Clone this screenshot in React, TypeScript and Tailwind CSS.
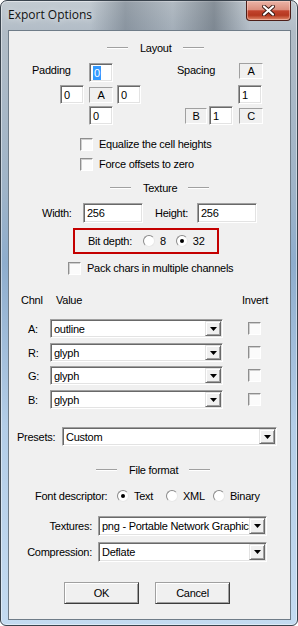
import React from 'react';

const text = "font-['Liberation_Sans',Arial,sans-serif] text-[11px] tracking-[-0.25px] leading-[14px] text-black";
const sunken =
  'border border-t-[#a0a0a0] border-l-[#a0a0a0] border-r-white border-b-white shadow-[inset_1px_1px_0_#696969,inset_-1px_-1px_0_#e3e3e3]';
const raised =
  'border border-t-[#e3e3e3] border-l-[#e3e3e3] border-r-[#696969] border-b-[#696969] shadow-[inset_1px_1px_0_#ffffff,inset_-1px_-1px_0_#a0a0a0]';

type Box = { className?: string; children?: React.ReactNode };

function Edit({ className = '', children }: Box) {
  return (
    <div className={`${sunken} bg-white flex items-center pl-[3px] overflow-hidden whitespace-nowrap ${className}`}>
      {children}
    </div>
  );
}

function Static({ className = '', children }: Box) {
  return (
    <div
      className={`border border-t-[#a0a0a0] border-l-[#a0a0a0] border-r-white border-b-white flex items-center justify-center ${className}`}
    >
      {children}
    </div>
  );
}

function Check({ className = '' }: { className?: string }) {
  return (
    <div
      className={`w-[13px] h-[13px] shrink-0 bg-[#fbfbfb] border border-t-[#8e8e8e] border-l-[#8e8e8e] border-r-white border-b-white shadow-[inset_1px_1px_0_#cfcfcf] ${className}`}
    />
  );
}

function Radio({ on = false, className = '' }: { on?: boolean; className?: string }) {
  return (
    <div
      className={`w-[12px] h-[12px] shrink-0 rounded-full bg-white border border-t-[#8a8a8a] border-l-[#8a8a8a] border-r-[#e8e8e8] border-b-[#e8e8e8] flex items-center justify-center ${className}`}
    >
      {on && <div className="w-[4px] h-[4px] rounded-full bg-black" />}
    </div>
  );
}

function Combo({ className = '', value }: { className?: string; value: string }) {
  return (
    <div className={`${sunken} bg-white flex items-stretch p-[1px] ${className}`}>
      <div className="flex-1 pl-[2px] flex items-center overflow-hidden whitespace-nowrap">{value}</div>
      <div className={`${raised} w-[16px] bg-[#f0f0f0] flex items-center justify-center`}>
        <svg width="7" height="4" viewBox="0 0 7 4">
          <path d="M0 0h7L3.5 4z" fill="#000" />
        </svg>
      </div>
    </div>
  );
}

function Group({ className = '', title, gap = 'mr-[11px]' }: { className?: string; title: string; gap?: string }) {
  return (
    <div className={`flex items-center h-[14px] ${className}`}>
      <div className="w-[21px] h-[2px] border-t border-t-[#a0a0a0] border-b border-b-white" />
      <span className={`ml-[12px] ${gap}`}>{title}</span>
      <div className="w-[21px] h-[2px] border-t border-t-[#a0a0a0] border-b border-b-white" />
    </div>
  );
}

function Button({ className = '', children }: Box) {
  return (
    <div
      className={`h-[22px] w-[75px] flex items-center justify-center bg-[#f0f0f0] border border-t-[#a0a0a0] border-l-[#a0a0a0] border-r-[#3c3c3c] border-b-[#3c3c3c] shadow-[inset_1px_1px_0_#ffffff,inset_-1px_-1px_0_#a0a0a0] ${className}`}
    >
      {children}
    </div>
  );
}

function Channel({ label, value, className }: { label: string; value: string; className: string }) {
  return (
    <div className={`flex items-center h-[19px] ${className}`}>
      <span className="ml-[19px] w-[22px]">{label}</span>
      <Combo className="w-[173px] h-[19px]" value={value} />
      <Check className="ml-[25px]" />
    </div>
  );
}

export default function App() {
  return (
    <div className="w-[298px] h-[626px] flex flex-col rounded-t-[7px] rounded-b-[6px] overflow-hidden border border-[#39434d] bg-[linear-gradient(180deg,#c3cbd2_0%,#b1bcc6_5%,#9fb4c8_30%,#8eadcd_42%,#b3cde7_68%,#c4dbf1_100%)] shadow-[inset_0_0_0_1px_rgba(255,255,255,0.45)]">
      <div className="h-[29px] flex items-start bg-[linear-gradient(90deg,rgba(0,0,0,0)_0%,rgba(0,0,0,0)_30%,rgba(60,72,86,0.35)_42%,rgba(60,72,86,0.12)_58%,rgba(45,55,66,0.4)_72%,rgba(0,0,0,0)_84%)]">
        <span className="ml-[7px] mt-[6px] font-['Open_Sans',Arial,sans-serif] text-[12px] leading-[16px] text-[#111] [text-shadow:0_0_6px_rgba(255,255,255,0.9)]">
          Export Options
        </span>
        <div className="ml-auto mr-[6px] w-[45px] h-[20px] rounded-b-[4px] border border-t-0 border-[#4d1e18] bg-[linear-gradient(180deg,#ebb4a7_0%,#dc8f7e_45%,#c2432d_52%,#b5381f_75%,#e1896b_100%)] flex items-center justify-center shadow-[inset_0_0_0_1px_rgba(255,220,210,0.45)]">
          <svg width="13" height="11" viewBox="0 0 13 11">
            <path d="M2 1.5l9 8M11 1.5l-9 8" stroke="#3b1a14" strokeWidth="4" strokeLinecap="round" />
            <path d="M2 1.5l9 8M11 1.5l-9 8" stroke="#fff" strokeWidth="2.2" strokeLinecap="round" />
          </svg>
        </div>
      </div>

      <div className={`ml-[7px] w-[283px] h-[590px] border border-[#6f7c88] bg-[#f0f0f0] flex flex-col ${text}`}>
        <Group className="mt-[10px] ml-[98px]" title="Layout" />

        <div className="mt-[8px] h-[19px] flex items-start">
          <span className="ml-[23px] w-[57px]">Padding</span>
          <Edit className="w-[24px] h-[19px]">
            <span className="bg-[#3399ff] text-white px-[1px]">0</span>
          </Edit>
          <span className="ml-[64px] w-[62px]">Spacing</span>
          <Static className="w-[24px] h-[16px]">A</Static>
        </div>
        <div className="mt-[3px] h-[19px] flex items-center">
          <Edit className="ml-[51px] w-[24px] h-[19px]">0</Edit>
          <Static className="ml-[5px] w-[24px] h-[16px]">A</Static>
          <Edit className="ml-[4px] w-[24px] h-[19px]">0</Edit>
          <Edit className="ml-[97px] w-[24px] h-[19px]">1</Edit>
        </div>
        <div className="mt-[2px] h-[19px] flex items-center">
          <Edit className="ml-[80px] w-[24px] h-[19px]">0</Edit>
          <Static className="ml-[72px] w-[22px] h-[16px]">B</Static>
          <Edit className="ml-[2px] w-[24px] h-[19px]">1</Edit>
          <Static className="ml-[6px] w-[24px] h-[16px]">C</Static>
        </div>

        <div className="mt-[11px] h-[16px] flex items-center">
          <Check className="ml-[71px]" />
          <span className="ml-[6px]">Equalize the cell heights</span>
        </div>
        <div className="mt-[4px] h-[16px] flex items-center">
          <Check className="ml-[71px]" />
          <span className="ml-[6px]">Force offsets to zero</span>
        </div>

        <Group className="mt-[9px] ml-[101px]" title="Texture" />

        <div className="mt-[8px] h-[20px] flex items-center">
          <span className="ml-[33px] w-[41px]">Width:</span>
          <Edit className="w-[60px] h-[20px]">256</Edit>
          <span className="ml-[12px] w-[42px]">Height:</span>
          <Edit className="w-[60px] h-[20px]">256</Edit>
        </div>

        <div className="mt-[5px] ml-[64px] w-[146px] h-[26px] border-2 border-[#c40000] flex items-center pl-[13px]">
          <span>Bit depth:</span>
          <Radio className="ml-[11px]" />
          <span className="ml-[5px]">8</span>
          <Radio on className="ml-[10px]" />
          <span className="ml-[5px]">32</span>
        </div>

        <div className="mt-[6px] h-[16px] flex items-center">
          <Check className="ml-[59px]" />
          <span className="ml-[6px]">Pack chars in multiple channels</span>
        </div>

        <div className="mt-[17px] h-[14px] flex items-center">
          <span className="ml-[12px] w-[35px]">Chnl</span>
          <span className="w-[186px]">Value</span>
          <span>Invert</span>
        </div>

        <Channel className="mt-[12px]" label="A:" value="outline" />
        <Channel className="mt-[5px]" label="R:" value="glyph" />
        <Channel className="mt-[4px]" label="G:" value="glyph" />
        <Channel className="mt-[5px]" label="B:" value="glyph" />

        <div className="mt-[18px] h-[19px] flex items-center">
          <span className="ml-[8px] w-[45px]">Presets:</span>
          <Combo className="w-[215px] h-[19px]" value="Custom" />
        </div>

        <Group className="mt-[17px] ml-[87px]" title="File format" />

        <div className="mt-[11px] h-[16px] flex items-center">
          <span className="ml-[26px] w-[82px]">Font descriptor:</span>
          <Radio on />
          <span className="ml-[5px] w-[32px]">Text</span>
          <Radio />
          <span className="ml-[5px] w-[30px]">XML</span>
          <Radio />
          <span className="ml-[5px]">Binary</span>
        </div>

        <div className="mt-[12px] h-[20px] flex items-center">
          <span className="w-[89px] text-right pr-[6px]">Textures:</span>
          <Combo className="w-[169px] h-[20px]" value="png - Portable Network Graphics" />
        </div>
        <div className="mt-[6px] h-[20px] flex items-center">
          <span className="w-[89px] text-right pr-[6px]">Compression:</span>
          <Combo className="w-[169px] h-[20px]" value="Deflate" />
        </div>

        <div className="mt-[20px] flex items-center">
          <Button className="ml-[55px]">OK</Button>
          <Button className="ml-[16px]">Cancel</Button>
        </div>
      </div>
    </div>
  );
}
